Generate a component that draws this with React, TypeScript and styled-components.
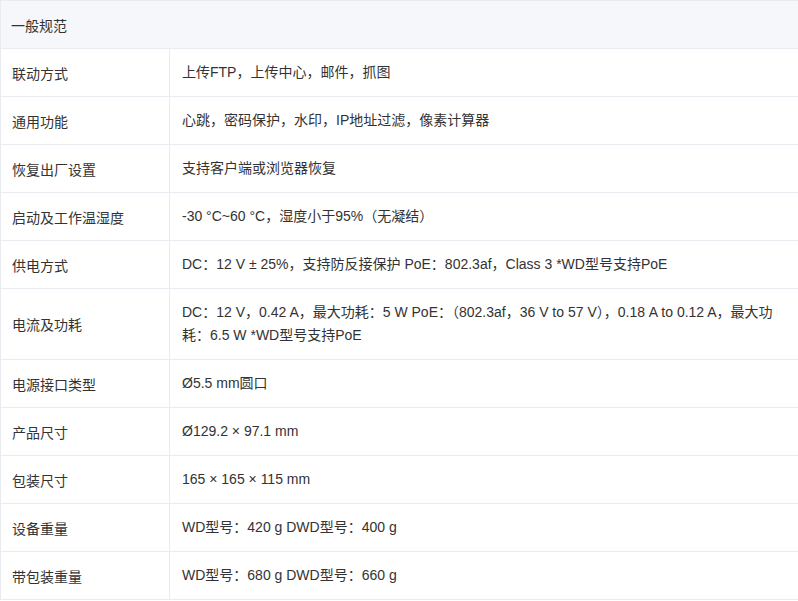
import React from 'react';
import styled, { createGlobalStyle } from 'styled-components';

const Global = createGlobalStyle`
  body { margin: 0; background: #fff; font-family: "Liberation Sans", "Noto Sans CJK SC", sans-serif; }
`;

const Table = styled.div`
  width: 797px;
  border-top: 1px solid #e8ebf0;
  border-left: 1px solid #e8ebf0;
  border-right: 1px solid #e8ebf0;
  color: #333;
  font-size: 14px;
`;

const Header = styled.div`
  height: 47px;
  display: flex;
  align-items: center;
  padding-left: 10px;
  background: #f5f7fa;
  border-bottom: 1px solid #e8ebf0;
`;

const Row = styled.div`
  display: grid;
  grid-template-columns: 169px 1fr;
  min-height: 47px;
  border-bottom: 1px solid #e8ebf0;
`;

const Label = styled.div`
  display: flex;
  align-items: center;
  padding-left: 11px;
  border-right: 1px solid #e8ebf0;
`;

const Value = styled.div`
  display: flex;
  align-items: center;
  padding: 12px 12px;
  line-height: 23px;
`;

const rows: [string, string][] = [
  ['联动方式', '上传FTP，上传中心，邮件，抓图'],
  ['通用功能', '心跳，密码保护，水印，IP地址过滤，像素计算器'],
  ['恢复出厂设置', '支持客户端或浏览器恢复'],
  ['启动及工作温湿度', '-30 °C~60 °C，湿度小于95%（无凝结）'],
  ['供电方式', 'DC：12 V ± 25%，支持防反接保护 PoE：802.3af，Class 3 *WD型号支持PoE'],
  ['电流及功耗', 'DC：12 V，0.42 A，最大功耗：5 W PoE：（802.3af，36 V to 57 V），0.18 A to 0.12 A，最大功耗：6.5 W *WD型号支持PoE'],
  ['电源接口类型', 'Ø5.5 mm圆口'],
  ['产品尺寸', 'Ø129.2 × 97.1 mm'],
  ['包装尺寸', '165 × 165 × 115 mm'],
  ['设备重量', 'WD型号：420 g DWD型号：400 g'],
  ['带包装重量', 'WD型号：680 g DWD型号：660 g'],
];

export default function App() {
  return (
    <>
      <Global />
      <Table>
        <Header>一般规范</Header>
        {rows.map(([k, v]) => (
          <Row key={k}>
            <Label>{k}</Label>
            <Value>{v}</Value>
          </Row>
        ))}
      </Table>
    </>
  );
}
